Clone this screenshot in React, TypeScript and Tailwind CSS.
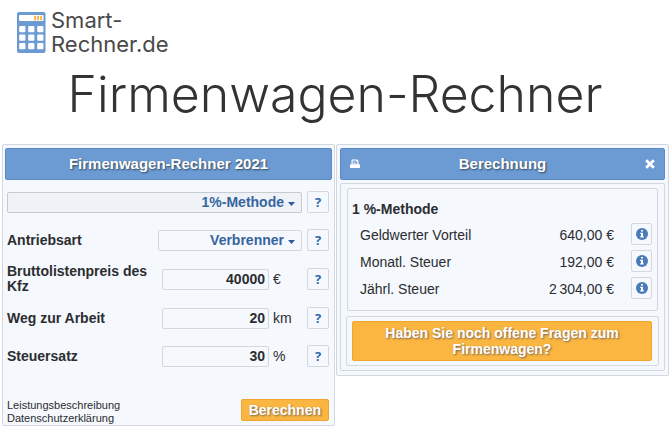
import { useState, type ReactNode } from 'react'

const RESULTS = [
  { label: 'Geldwerter Vorteil', value: '640,00 €' },
  { label: 'Monatl. Steuer', value: '192,00 €' },
  { label: 'Jährl. Steuer', value: '2\u2009304,00 €' },
]

const INPUTS = [
  { id: 'preis', label: 'Bruttolistenpreis des Kfz', value: '40000', unit: '€', row: 'h-10' },
  { id: 'weg', label: 'Weg zur Arbeit', value: '20', unit: 'km', row: 'h-[38px]' },
  { id: 'satz', label: 'Steuersatz', value: '30', unit: '%', row: 'h-[38px]' },
]

function Logo() {
  return (
    <svg className="h-[41px] w-[29px] shrink-0" viewBox="0 0 29 41" aria-hidden="true">
      <rect width="28.5" height="41" rx="2" fill="#6c9bd4" />
      <rect x="2" y="3" width="24.5" height="6" rx="1" fill="#fff" />
      {[18, 21, 24].map((x) => (
        <rect key={x} x={x - 0.8} y="3.8" width="1.8" height="4.6" fill="#f9b440" />
      ))}
      {[14, 22.5, 31].map((y) =>
        [2.2, 11.2, 20.2].map((x) => (
          <rect key={`${x}-${y}`} x={x} y={y} width="6.2" height="6.2" rx="1" fill="#fff" />
        )),
      )}
    </svg>
  )
}

function HelpButton({ topic }: { topic: string }) {
  return (
    <button
      type="button"
      aria-label={`Hilfe: ${topic}`}
      className="flex size-[22px] shrink-0 items-center justify-center rounded-xs border border-[#d3d7df] bg-[#f5f8fd] font-['Open_Sans',sans-serif] text-[13px] font-bold leading-none text-[#2f68ad]"
    >
      ?
    </button>
  )
}

function PanelHeader({ children }: { children: ReactNode }) {
  return (
    <div className="flex h-8 items-center rounded-xs border border-[#5b8bcb] bg-[#6c9bd4] px-[6px] text-white">
      {children}
    </div>
  )
}

interface DropdownProps {
  label: string
  options: string[]
  className: string
}

function Dropdown({ label, options, className }: DropdownProps) {
  return (
    <div className={`relative h-[21px] ${className}`}>
      <select
        id={label}
        aria-label={label}
        className="block h-full w-full appearance-none rounded-xs border border-inherit bg-transparent pr-[17px] text-right text-[14px] font-bold leading-[19px] text-[#36649f] [text-align-last:right]"
      >
        {options.map((o) => (
          <option key={o}>{o}</option>
        ))}
      </select>
      <svg className="pointer-events-none absolute right-[7px] top-[10px] h-[4px] w-[7px]" viewBox="0 0 7 4" aria-hidden="true">
        <path d="M0 0h7L3.500 4z" fill="#2c5b9b" />
      </svg>
    </div>
  )
}

function CalculatorPanel() {
  const [values, setValues] = useState<Record<string, string>>(
    Object.fromEntries(INPUTS.map((i) => [i.id, i.value])),
  )

  return (
    <form
      className="flex flex-col rounded-xs border border-[#d3d7df] bg-[#f5f8fd] px-0.5 pt-[3px]"
      onSubmit={(e) => e.preventDefault()}
    >
      <PanelHeader>
        <h2 className="flex-1 text-center text-[15px] font-bold [text-shadow:1px_1px_2px_#345]">
          Firmenwagen-Rechner 2021
        </h2>
      </PanelHeader>

      <div className="mt-[3px] flex flex-col pl-0.5 pr-[3px]">
        <div className="flex h-[38px] items-center gap-[5px]">
          <Dropdown
            label="Methode"
            options={['1%-Methode', 'Fahrtenbuch']}
            className="flex-1 border-[#c5c9d0] bg-[#eff3f8]"
          />
          <HelpButton topic="Methode" />
        </div>

        <div className="flex h-[38px] items-center gap-[5px]">
          <label htmlFor="Antriebsart" className="flex-1 text-[14px] font-bold leading-[15px]">
            Antriebsart
          </label>
          <Dropdown
            label="Antriebsart"
            options={['Verbrenner', 'Elektro', 'Hybrid']}
            className="w-36 border-[#d3d7df]"
          />
          <HelpButton topic="Antriebsart" />
        </div>

        {INPUTS.map((i) => (
          <div key={i.id} className={`flex items-center ${i.row}`}>
            <label htmlFor={i.id} className="flex-1 text-[14px] font-bold leading-[15px]">
              {i.label}
            </label>
            <input
              id={i.id}
              value={values[i.id]}
              onChange={(e) => setValues({ ...values, [i.id]: e.target.value })}
              className="h-[21px] w-[107px] rounded-xs border border-[#d3d7df] bg-transparent px-[3px] text-right text-[14px] font-bold"
            />
            <span className="ml-1 w-[34px] text-[14px]">{i.unit}</span>
            <HelpButton topic={i.label} />
          </div>
        ))}
      </div>

      <div className="mt-6 flex items-start justify-between pl-0.5 pr-[3px]">
        <nav className="flex flex-col text-[11px] leading-[13px]">
          <a href="#leistung">Leistungsbeschreibung</a>
          <a href="#datenschutz">Datenschutzerklärung</a>
        </nav>
        <button
          type="submit"
          className="h-[22px] rounded-xs border border-[#f0a52c] bg-[#fab640] px-[7px] text-[14px] font-bold leading-5 text-white [text-shadow:1px_1px_2px_#765]"
        >
          Berechnen
        </button>
      </div>
    </form>
  )
}

function ResultPanel() {
  return (
    <section className="rounded-xs border border-[#d3d7df] bg-[#f5f8fd] p-[3px] pb-1">
      <PanelHeader>
        <button type="button" aria-label="Drucken" className="flex size-4 items-center justify-center">
          <svg className="h-[10px] w-[10px]" viewBox="0 0 10 10" aria-hidden="true">
            <path
              fillRule="evenodd"
              fill="#fff"
              d="M2 0.5h5.2l1.3 1.3v3.400h.5a1 1 0 0 1 1 1V9H0V6.200a1 1 0 0 1 1-1h.5V1zM2.700 1.500v3.700h4.600V2.500H6.300v-1zM3.500 2.600h2v.7h-2zM3.500 4h3v.7h-3z"
            />
          </svg>
        </button>
        <h2 className="flex-1 text-center text-[15px] font-bold [text-shadow:1px_1px_2px_#345]">Berechnung</h2>
        <button type="button" aria-label="Schließen" className="flex size-4 items-center justify-center">
          <svg className="h-[10px] w-[10px]" viewBox="0 0 10 10" aria-hidden="true">
            <path d="M1.200 1.200l7.600 7.600M8.800 1.200l-7.600 7.600" stroke="#fff" strokeWidth="2.800" />
          </svg>
        </button>
      </PanelHeader>

      <div className="mt-[3px] rounded-xs border border-[#d3d7df] px-[5px] py-1">
        <div className="mx-px rounded-xs border border-[#d3d7df] pb-[9px] pl-1 pr-[5px] pt-[10px]">
          <h3 className="text-[14px] font-bold leading-5">1 %-Methode</h3>
          <table className="mt-px w-full text-[14px] leading-5">
            <tbody>
              {RESULTS.map((r) => (
                <tr key={r.label} className="h-[27px]">
                  <th scope="row" className="p-0 pl-2 pt-0.5 text-left font-normal">{r.label}</th>
                  <td className="p-0 pt-0.5 text-right">{r.value}</td>
                  <td className="w-[38px] p-0">
                    <button
                      type="button"
                      aria-label={`Info: ${r.label}`}
                      className="ml-auto flex h-[22px] w-[21px] items-center justify-center rounded-xs border border-[#d3d7df]"
                    >
                      <svg className="size-3" viewBox="0 0 12 12" aria-hidden="true">
                        <circle cx="6" cy="6" r="6" fill="#4a7ab7" />
                        <path d="M5 2h2v1.600H5zM4.200 4.700H7v3.600h.8v1.200H4.200V8.300H5V5.900h-.8z" fill="#fff" />
                      </svg>
                    </button>
                  </td>
                </tr>
              ))}
            </tbody>
          </table>
        </div>

        <div className="mt-[5px] rounded-xs border border-[#d3d7df] py-1 pl-[5px] pr-[6px]">
          <button
            type="button"
            className="block w-full rounded-xs border border-[#f0a52c] bg-[#fab640] px-6 py-[3px] text-[14px] font-bold leading-4 text-white [text-shadow:1px_1px_2px_#765]"
          >
            Haben Sie noch offene Fragen zum Firmenwagen?
          </button>
        </div>
      </div>
    </section>
  )
}

export default function App() {
  return (
    <div className="bg-white font-['Liberation_Sans',Arial,sans-serif] text-[#2b2d30]">
      <header>
        <a href="#start" className="flex w-fit gap-[5px] pl-[17px] pt-3 font-['Inter',sans-serif] text-[22px] font-normal leading-6 text-[#4a4a4a]">
          <Logo />
          <span className="-mt-1 flex flex-col">
            <span>Smart-</span>
            <span>Rechner.de</span>
          </span>
        </a>
        <h1 className="mt-1 text-center font-['Inter',sans-serif] text-[50px] font-light leading-[68px] text-[#333]">
          Firmenwagen-Rechner
        </h1>
      </header>

      <main className="mt-4 grid grid-cols-2 items-start gap-px pl-0.5 pr-px">
        <CalculatorPanel />
        <ResultPanel />
      </main>
    </div>
  )
}
